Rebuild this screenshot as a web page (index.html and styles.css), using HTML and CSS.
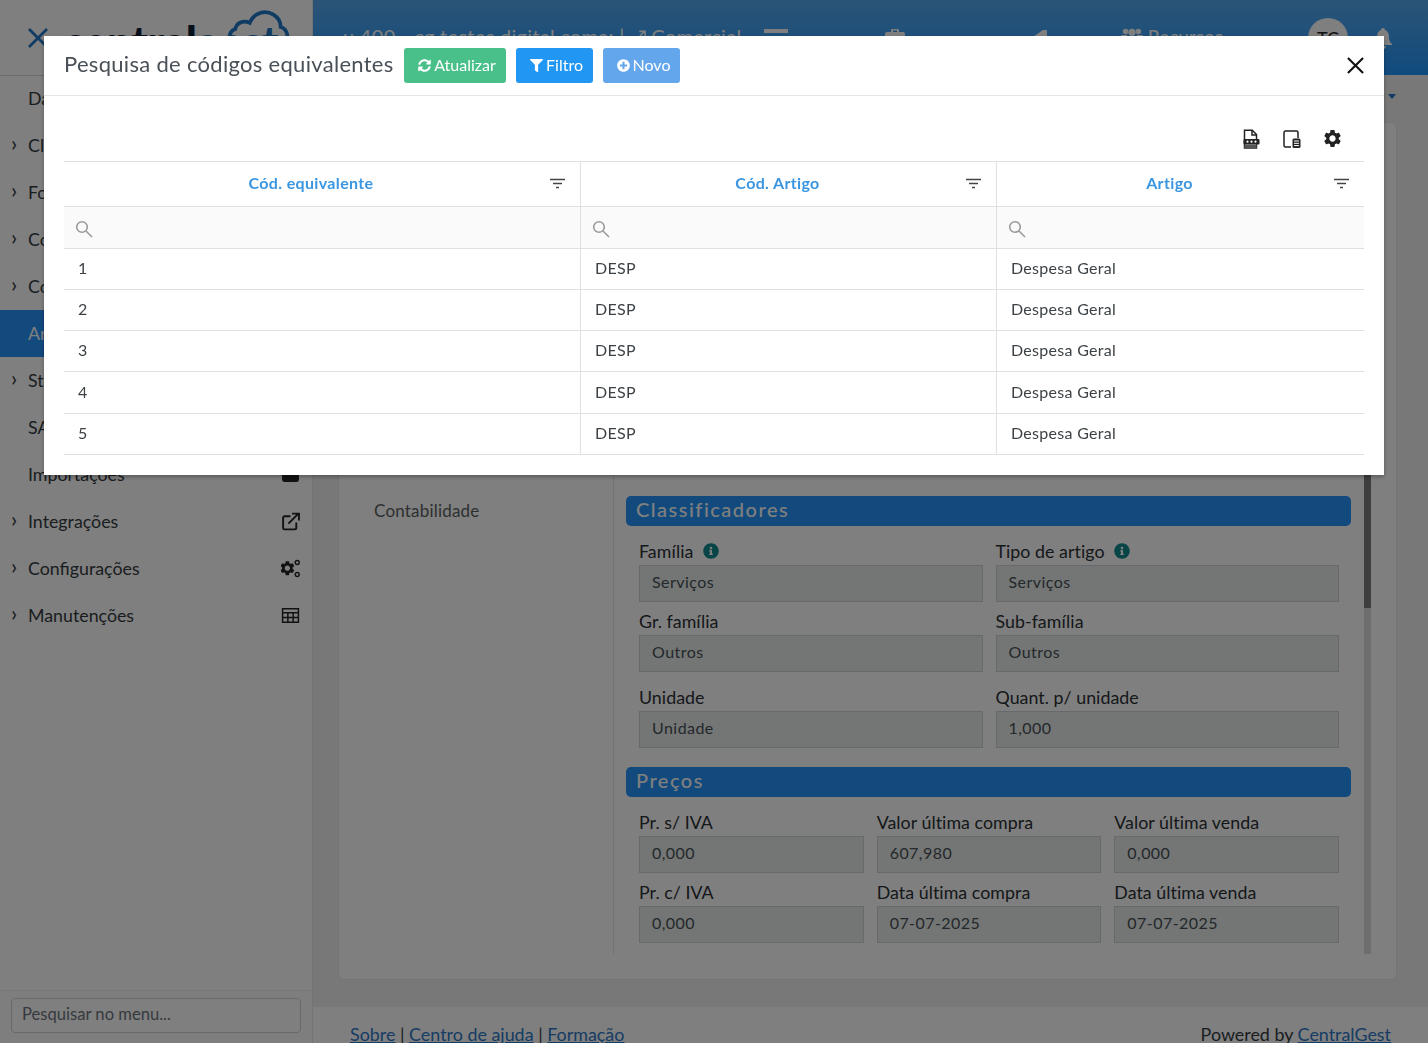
FILE: index.html
```html
<!DOCTYPE html>
<html lang="pt">
<head>
<meta charset="utf-8">
<title>Pesquisa de códigos equivalentes</title>
<link rel="stylesheet" href="styles.css">
</head>
<body>
<div class="app">
  <aside class="sidebar">
    <div class="brand">
      <svg class="brand-x" viewBox="0 0 22 22"><path d="M2 2l18 18M20 2L2 20"/></svg>
      <span class="brand-text">central<span class="brand-accent">gest</span></span>
      <svg class="brand-cloud" viewBox="0 0 64 40"><path d="M10 38C2 36 1 24 9 21c1-6 8-9 14-6C27 5 38 2 46 7c5 3 7 8 7 12 7 2 9 12 3 18"/></svg>
    </div>
    <nav class="menu">
      <a class="item"><span class="chev"></span><span class="label">Dashboard</span></a>
      <a class="item"><span class="chev">›</span><span class="label">Clientes</span></a>
      <a class="item"><span class="chev">›</span><span class="label">Fornecedores</span></a>
      <a class="item"><span class="chev">›</span><span class="label">Compras</span></a>
      <a class="item"><span class="chev">›</span><span class="label">Contabilidade</span></a>
      <a class="item active"><span class="chev"></span><span class="label">Artigos</span></a>
      <a class="item"><span class="chev">›</span><span class="label">Stocks</span></a>
      <a class="item"><span class="chev"></span><span class="label">SAF-T</span></a>
      <a class="item"><span class="chev"></span><span class="label">Importações</span>
        <svg class="mi" viewBox="0 0 18 18"><rect x="1" y="3" width="16" height="13" rx="2" fill="currentColor"/></svg></a>
      <a class="item"><span class="chev">›</span><span class="label">Integrações</span>
        <svg class="mi" viewBox="0 0 18 18"><path class="ln" d="M9 4H3.500A1.500 1.500 0 0 0 2 5.500V15a1.500 1.500 0 0 0 1.500 1.500H13a1.500 1.500 0 0 0 1.500-1.500V10"/><path class="ln" d="M7 11L16 2M10.500 1.500H17V8"/></svg></a>
      <a class="item"><span class="chev">›</span><span class="label">Configurações</span>
        <svg class="mi" viewBox="0 0 24 24"><path fill="currentColor" transform="translate(-3 .5) scale(.92)" d="M19.140 12.940c.04-.3.06-.61.06-.94 0-.32-.02-.64-.07-.94l2.030-1.580a.49.49 0 0 0 .12-.61l-1.920-3.320a.488.488 0 0 0-.59-.22l-2.390.96c-.5-.38-1.030-.7-1.620-.94l-.36-2.540a.484.484 0 0 0-.48-.41h-3.840c-.24 0-.43.17-.47.41l-.36 2.540c-.59.24-1.130.57-1.620.94l-2.390-.96c-.22-.08-.47 0-.59.22L2.740 8.870c-.12.21-.08.47.12.61l2.030 1.580c-.05.3-.09.63-.09.94s.02.64.07.94l-2.030 1.580a.49.49 0 0 0-.12.61l1.920 3.320c.12.22.37.29.59.22l2.390-.96c.5.38 1.030.7 1.620.94l.36 2.540c.05.24.24.41.48.41h3.840c.24 0 .44-.17.47-.41l.36-2.540c.59-.24 1.130-.56 1.620-.94l2.390.96c.22.08.47 0 .59-.22l1.920-3.320c.12-.22.07-.47-.12-.61l-2.010-1.580zM12 15.600c-1.980 0-3.600-1.620-3.600-3.600s1.620-3.600 3.600-3.600 3.600 1.620 3.600 3.600-1.620 3.600-3.600 3.600z"/><circle class="ln2" cx="20.500" cy="4.500" r="2.500"/><circle class="ln2" cx="20.500" cy="19.500" r="2.500"/></svg></a>
      <a class="item"><span class="chev">›</span><span class="label">Manutenções</span>
        <svg class="mi" viewBox="0 0 18 18"><path class="ln ln-thin" d="M1.500 2.500h15v13h-15zM1.500 6.500h15M1.500 11h15M6.500 6.500v9M11.500 6.500v9"/></svg></a>
    </nav>
    <div class="side-search"><div class="side-input">Pesquisar no menu...</div></div>
  </aside>

  <div class="main">
    <header class="topbar">
      <span class="top-company">u 400 - cg testes digital.coma: | <svg class="ti ti-ext" viewBox="0 0 18 18"><path d="M7 11L16 2M10.500 1.500H17V8" class="ln"/></svg> Comercial<span class="caret"></span></span>
      <span class="bars"><i></i><i></i><i></i></span>
      <svg class="ti ti-brief" viewBox="0 0 20 20"><path fill="currentColor" d="M7 2h6a1 1 0 0 1 1 1v2h4a2 2 0 0 1 2 2v10H0V7a2 2 0 0 1 2-2h4V3a1 1 0 0 1 1-1zm1 1.500V5h4V3.500z"/></svg>
      <svg class="ti ti-home" viewBox="0 0 20 20"><path fill="currentColor" d="M13 3L0 12l1.500 1.500L3 12.300V19h14V3z"/></svg>
      <span class="top-res"><svg class="ti" viewBox="0 0 24 20"><g fill="currentColor"><circle cx="5" cy="5" r="3"/><circle cx="19" cy="5" r="3"/><circle cx="12" cy="6" r="4"/><path d="M0 9h7l-2 6H0zM17 9h7v6h-5zM6 11h12v8H6z"/></g></svg> Recursos</span>
      <span class="avatar">TC</span>
      <svg class="ti ti-bell" viewBox="0 0 18 22"><path fill="currentColor" d="M9 0a2 2 0 0 1 2 2c3 1 4 4 4 7 0 4 1 5 3 7v1H0v-1c2-2 3-3 3-7 0-3 1-6 4-7a2 2 0 0 1 2-2zM6 18h6a3 3 0 0 1-6 0z"/></svg>
    </header>

    <div class="tabs"><span class="tab-caret"></span></div>

    <section class="card">
      <div class="card-tabs"><span class="card-tab">Contabilidade</span></div>
      <div class="pane">
        <div class="form">
          <h3 class="bar">Classificadores</h3>
          <div class="row row2">
            <div class="field"><label class="flabel">Família <svg class="info" viewBox="0 0 512 512"><path d="M256 8C119.043 8 8 119.083 8 256c0 136.997 111.043 248 248 248s248-111.003 248-248C504 119.083 392.957 8 256 8zm0 110c23.196 0 42 18.804 42 42s-18.804 42-42 42-42-18.804-42-42 18.804-42 42-42zm56 254c0 6.627-5.373 12-12 12h-88c-6.627 0-12-5.373-12-12v-24c0-6.627 5.373-12 12-12h12v-64h-12c-6.627 0-12-5.373-12-12v-24c0-6.627 5.373-12 12-12h64c6.627 0 12 5.373 12 12v100h12c6.627 0 12 5.373 12 12v24z"/></svg></label><div class="input">Serviços</div></div>
            <div class="field"><label class="flabel">Tipo de artigo <svg class="info" viewBox="0 0 512 512"><path d="M256 8C119.043 8 8 119.083 8 256c0 136.997 111.043 248 248 248s248-111.003 248-248C504 119.083 392.957 8 256 8zm0 110c23.196 0 42 18.804 42 42s-18.804 42-42 42-42-18.804-42-42 18.804-42 42-42zm56 254c0 6.627-5.373 12-12 12h-88c-6.627 0-12-5.373-12-12v-24c0-6.627 5.373-12 12-12h12v-64h-12c-6.627 0-12-5.373-12-12v-24c0-6.627 5.373-12 12-12h64c6.627 0 12 5.373 12 12v100h12c6.627 0 12 5.373 12 12v24z"/></svg></label><div class="input">Serviços</div></div>
          </div>
          <div class="row row2 tight">
            <div class="field"><label class="flabel">Gr. família</label><div class="input">Outros</div></div>
            <div class="field"><label class="flabel">Sub-família</label><div class="input">Outros</div></div>
          </div>
          <div class="row row2">
            <div class="field"><label class="flabel">Unidade</label><div class="input">Unidade</div></div>
            <div class="field"><label class="flabel">Quant. p/ unidade</label><div class="input">1,000</div></div>
          </div>
          <h3 class="bar bar-next">Preços</h3>
          <div class="row row3">
            <div class="field"><label class="flabel">Pr. s/ IVA</label><div class="input">0,000</div></div>
            <div class="field"><label class="flabel">Valor última compra</label><div class="input">607,980</div></div>
            <div class="field"><label class="flabel">Valor última venda</label><div class="input">0,000</div></div>
          </div>
          <div class="row row3 tight">
            <div class="field"><label class="flabel">Pr. c/ IVA</label><div class="input">0,000</div></div>
            <div class="field"><label class="flabel">Data última compra</label><div class="input">07-07-2025</div></div>
            <div class="field"><label class="flabel">Data última venda</label><div class="input">07-07-2025</div></div>
          </div>
        </div>
        <div class="scroll"><div class="thumb"></div></div>
      </div>
    </section>

    <footer class="foot">
      <span><a>Sobre</a> | <a>Centro de ajuda</a> | <a>Formação</a></span>
      <span>Powered by <a>CentralGest</a></span>
    </footer>
  </div>
</div>

<div class="overlay"></div>

<div class="modal">
  <div class="modal-head">
    <h2 class="modal-title">Pesquisa de códigos equivalentes</h2>
    <button class="btn btn-green"><svg class="bi" viewBox="0 0 512 512"><path d="M370.720 133.280C339.458 104.008 298.888 87.962 255.848 88c-77.458.068-144.328 53.178-162.791 126.850-1.344 5.363-6.122 9.150-11.651 9.150H24.103c-7.498 0-13.194-6.807-11.807-14.176C33.933 94.924 134.813 8 256 8c66.448 0 126.791 26.136 171.315 68.685L463.030 40.970C478.149 25.851 504 36.559 504 57.941V192c0 13.255-10.745 24-24 24H345.941c-21.382 0-32.090-25.851-16.971-40.971l41.750-41.749zM32 296h134.059c21.382 0 32.090 25.851 16.971 40.971l-41.750 41.750c31.262 29.273 71.835 45.319 114.876 45.280 77.418-.07 144.315-53.144 162.787-126.849 1.344-5.363 6.122-9.150 11.651-9.150h57.304c7.498 0 13.194 6.807 11.807 14.176C478.067 417.076 377.187 504 256 504c-66.448 0-126.791-26.136-171.315-68.685L48.970 471.030C33.851 486.149 8 475.441 8 454.059V320c0-13.255 10.745-24 24-24z"/></svg>Atualizar</button>
    <button class="btn btn-blue"><svg class="bi" viewBox="0 0 512 512"><path d="M487.976 0H24.028C2.710 0-8.047 25.866 7.058 40.971L192 225.941V432c0 7.831 3.821 15.170 10.237 19.662l80 55.980C298.020 518.690 320 507.493 320 487.980V225.941l184.947-184.970C520.021 25.896 509.338 0 487.976 0z"/></svg>Filtro</button>
    <button class="btn btn-light"><svg class="bi" viewBox="0 0 512 512"><path d="M256 8C119 8 8 119 8 256s111 248 248 248 248-111 248-248S393 8 256 8zm144 276c0 6.600-5.400 12-12 12h-92v92c0 6.600-5.400 12-12 12h-56c-6.600 0-12-5.400-12-12v-92h-92c-6.600 0-12-5.400-12-12v-56c0-6.600 5.400-12 12-12h92v-92c0-6.600 5.400-12 12-12h56c6.600 0 12 5.400 12 12v92h92c6.600 0 12 5.400 12 12v56z"/></svg>Novo</button>
    <button class="close" aria-label="Fechar"><svg viewBox="0 0 18 18"><path d="M1 1l16 16M17 1L1 17"/></svg></button>
  </div>
  <div class="modal-body">
    <div class="tools">
      <svg class="tool" viewBox="0 0 20 20"><path d="M3.500 19V1.200h7.800l4.200 4.300V19z" class="tl"/><path d="M11 1.200v4.800h4.500" class="tl"/><rect x="2.500" y="10" width="16" height="5.500" rx="1" fill="#222"/><path d="M3.500 15.500h12V19h-12z" fill="#555"/><circle cx="6.500" cy="12.700" r="1.100" fill="#fff"/><circle cx="10.500" cy="12.700" r="1.100" fill="#fff"/><circle cx="14.500" cy="12.700" r="1.100" fill="#fff"/></svg>
      <svg class="tool" viewBox="0 0 20 20"><path d="M9 18H3.500A1.500 1.500 0 0 1 2 16.500V3.500A1.500 1.500 0 0 1 3.500 2h11A1.500 1.500 0 0 1 16 3.500V9" class="tl"/><rect x="10.500" y="9.500" width="8" height="9.500" rx="1.500" fill="#222"/><path d="M12 12h5M12 14.300h5M12 16.600h5" stroke="#fff" stroke-width="1"/></svg>
      <svg class="tool tool-gear" viewBox="0 0 24 24"><path fill="#222" d="M19.140 12.940c.04-.3.06-.61.06-.94 0-.32-.02-.64-.07-.94l2.030-1.580a.49.49 0 0 0 .12-.61l-1.920-3.320a.488.488 0 0 0-.59-.22l-2.390.96c-.5-.38-1.030-.7-1.620-.94l-.36-2.540a.484.484 0 0 0-.48-.41h-3.840c-.24 0-.43.17-.47.41l-.36 2.540c-.59.24-1.130.57-1.620.94l-2.390-.96c-.22-.08-.47 0-.59.22L2.740 8.870c-.12.21-.08.47.12.61l2.030 1.580c-.05.3-.09.63-.09.94s.02.64.07.94l-2.030 1.580a.49.49 0 0 0-.12.61l1.920 3.320c.12.22.37.29.59.22l2.390-.96c.5.38 1.030.7 1.620.94l.36 2.540c.05.24.24.41.48.41h3.840c.24 0 .44-.17.47-.41l.36-2.540c.59-.24 1.130-.56 1.620-.94l2.390.96c.22.08.47 0 .59-.22l1.920-3.320c.12-.22.07-.47-.12-.61l-2.010-1.580zM12 15.600c-1.980 0-3.600-1.620-3.600-3.600s1.620-3.600 3.600-3.600 3.600 1.620 3.600 3.600-1.620 3.600-3.600 3.600z"/></svg>
    </div>
    <table class="grid">
      <colgroup><col class="c1"><col class="c2"><col class="c3"></colgroup>
      <thead>
        <tr class="hrow">
          <th><span class="th-text">Cód. equivalente</span><svg class="fic" viewBox="0 0 15 12"><path d="M0 1.500h15M3 5.500h9M6 9.500h3"/></svg></th>
          <th><span class="th-text">Cód. Artigo</span><svg class="fic" viewBox="0 0 15 12"><path d="M0 1.500h15M3 5.500h9M6 9.500h3"/></svg></th>
          <th><span class="th-text">Artigo</span><svg class="fic" viewBox="0 0 15 12"><path d="M0 1.500h15M3 5.500h9M6 9.500h3"/></svg></th>
        </tr>
        <tr class="frow">
          <td><svg class="sic" viewBox="0 0 18 18"><circle cx="7" cy="7" r="5.300"/><path d="M11 11l6 6"/></svg></td>
          <td><svg class="sic" viewBox="0 0 18 18"><circle cx="7" cy="7" r="5.300"/><path d="M11 11l6 6"/></svg></td>
          <td><svg class="sic" viewBox="0 0 18 18"><circle cx="7" cy="7" r="5.300"/><path d="M11 11l6 6"/></svg></td>
        </tr>
      </thead>
      <tbody>
        <tr><td>1</td><td>DESP</td><td>Despesa Geral</td></tr>
        <tr><td>2</td><td>DESP</td><td>Despesa Geral</td></tr>
        <tr><td>3</td><td>DESP</td><td>Despesa Geral</td></tr>
        <tr><td>4</td><td>DESP</td><td>Despesa Geral</td></tr>
        <tr><td>5</td><td>DESP</td><td>Despesa Geral</td></tr>
      </tbody>
    </table>
  </div>
</div>
</body>
</html>
```

FILE: styles.css
```css
* { box-sizing: border-box; }
html, body { margin: 0; height: 100%; overflow: hidden; }
body { font-family: "Lato", "Noto Sans", sans-serif; color: #343a40; font-size: 18px; }

.app { display: grid; grid-template-columns: 313px 1fr; height: 1043px; }

/* sidebar */
.sidebar { display: flex; flex-direction: column; background: #fff; border-right: 1px solid #e6e8ea; height: 1043px; }
.brand { position: relative; height: 75px; flex: none; box-shadow: 0 1px 0 #d8d8d8; overflow: hidden; display: flex; align-items: center; }
.brand-x { width: 22px; height: 22px; margin-left: 27px; margin-top: 1px; flex: none; }
.brand-x path { fill: none; stroke: #2178c8; stroke-width: 2.800; }
.brand-text { margin-left: 14px; font-size: 44px; font-weight: 900; color: #0e2236; line-height: 1; letter-spacing: -.3px; margin-top: 6px; }
.brand-accent { color: #2178c8; }
.brand-cloud { position: absolute; left: 226px; top: 7px; width: 66px; height: 42px; fill: none; stroke: #2178c8; stroke-width: 3.600; }
.menu { flex: 1; display: flex; flex-direction: column; }
.item { height: 47px; display: flex; align-items: center; padding: 0 12px 1px 0; flex: none; }
.chev { width: 28px; flex: none; padding-left: 11px; font-size: 22px; line-height: 1; margin-top: -4px; }
.label { flex: 1; font-size: 17.800px; }
.active { background: #2594fa; color: #fff; }
.mi { width: 19px; height: 19px; color: #222; flex: none; }
.ln { fill: none; stroke: currentColor; stroke-width: 1.800; }
.ln-thin { stroke-width: 1.400; }
.ln2 { fill: none; stroke: currentColor; stroke-width: 1.800; }
.side-search { height: 53px; flex: none; padding: 7px 11px 0; border-top: 1px solid #f0f0f0; background: #fcfcfc; }
.side-input { height: 35px; border: 1px solid #cfd4d8; border-radius: 4px; font-size: 16.600px; line-height: 31px; padding-left: 10px; color: #6c757d; background: #fff; }

/* main */
.main { display: flex; flex-direction: column; background: #eef0ee; height: 1043px; min-width: 0; }
.topbar { height: 75px; flex: none; background: linear-gradient(#58a8ee, #2096fb); color: #fff; display: flex; align-items: center; font-size: 20px; padding-left: 30px; }
.top-company { white-space: nowrap; margin-top: -3px; letter-spacing: .3px; width: 421px; flex: none; }
.ti { width: 20px; height: 20px; color: #fff; flex: none; vertical-align: -2px; }
.ti-ext { width: 16px; height: 16px; }
.caret { display: inline-block; border: 5px solid transparent; border-top-color: #fff; border-bottom: 0; margin-left: 3px; vertical-align: 3px; }
.bars { display: flex; flex-direction: column; gap: 5px; width: 24px; margin-top: 4px; flex: none; }
.bars i { display: block; height: 4px; background: #fff; }
.ti-brief { margin-left: 97px; margin-top: -2px; }
.ti-home { margin-left: 125px; margin-top: -2px; }
.top-res { margin-left: 71px; width: 187px; white-space: nowrap; margin-top: -3px; flex: none; font-size: 19px; }
.top-res .ti { width: 22px; }
.avatar { width: 40px; height: 40px; border-radius: 50%; background: #fff; color: #222; display: flex; align-items: center; justify-content: center; font-size: 18px; flex: none; }
.ti-bell { margin-left: 26px; margin-top: 2px; width: 18px; height: 22px; }
.tabs { height: 47px; flex: none; display: flex; justify-content: flex-end; padding: 19px 32px 0 0; }
.tab-caret { border: 4px solid transparent; border-top: 5px solid #2178c8; border-bottom: 0; width: 0; height: 0; }
.card { margin: 0 31px 0 25px; height: 858px; flex: none; background: #fff; border-radius: 6px; border: 1px solid #e8e8e8; display: grid; grid-template-columns: 275px 1fr; padding-bottom: 26px; }
.card-tabs { border-right: 1px solid #e4e4e4; padding: 377px 0 0 35px; font-size: 17px; letter-spacing: .2px; color: #5a5f63; }
.pane { display: flex; min-width: 0; }
.form { width: 750px; flex: none; padding: 373px 13px 0 12px; }
.bar { margin: 0; height: 30px; border-radius: 5px; background: #2594fa; color: #fff; font-size: 20px; font-weight: 500; line-height: 27px; padding-left: 10px; letter-spacing: 1.500px; }
.bar-next { margin-top: 19px; }
.row { display: grid; padding: 14px 12px 0 13px; column-gap: 13px; }
.row.tight { padding-top: 8px; }
.row2 { grid-template-columns: 1fr 1fr; }
.row3 { grid-template-columns: 1fr 1fr 1fr; }
.flabel { display: flex; align-items: center; gap: 9px; height: 25px; padding-bottom: 4px; font-size: 17.800px; letter-spacing: .05px; color: #2b3034; }
.info { width: 16px; height: 16px; fill: #0f8a8f; }
.input { height: 37px; border: 1px solid #ced4da; background: #e6ece9; padding-left: 12px; font-size: 16px; line-height: 31px; letter-spacing: .45px; color: #495057; }
.scroll { width: 7px; flex: none; height: 831px; background: #dcdcdc; }
.thumb { height: 485px; background: #7c7c7c; }

.foot { flex: 1; margin-top: 26px; border-top: 1px solid #f3f3f3; background: #fff; display: flex; justify-content: space-between; padding: 16px 37px 0; font-size: 17.900px; white-space: nowrap; }
.foot a { color: #2c78c8; text-decoration: underline; }

/* modal */
.overlay { position: fixed; inset: 0; background: rgba(0, 0, 0, .5); }
.modal { position: fixed; left: 44px; top: 36px; width: 1340px; height: 439px; background: #fff; box-shadow: 0 2px 4px rgba(0,0,0,.3); color: #343a40; }
.modal-head { height: 60px; border-bottom: 1px solid #e3e6e8; display: flex; align-items: center; padding: 0 20px; gap: 10px; }
.modal-title { margin: 0 0 5px; font-size: 22px; font-weight: 400; color: #495057; letter-spacing: .3px; white-space: nowrap; width: 330px; flex: none; }
.btn { height: 35px; border: 0; border-radius: 3px; color: #fff; font: 400 16px "Lato", sans-serif; display: flex; align-items: center; justify-content: center; gap: 3px; padding: 0 0 2px 4px; flex: none; }
.bi { width: 13px; height: 13px; fill: #fff; margin-top: 2px; }
.btn-green { width: 102px; background: #49bf8a; }
.btn-blue { width: 77px; background: #2196f3; }
.btn-light { width: 77px; background: #64a6ec; }
.close { margin-left: auto; width: 17px; height: 17px; padding: 0; border: 0; background: none; }
.close svg { display: block; width: 17px; height: 17px; fill: none; stroke: #111; stroke-width: 2.200; }
.modal-body { padding: 0 20px; }
.tools { height: 65px; display: flex; justify-content: flex-end; align-items: flex-end; gap: 21px; padding: 0 21px 12px 0; }
.tool { width: 20px; height: 20px; display: block; }
.tool-gear { width: 21px; height: 21px; margin-left: -1px; }
.tl { fill: none; stroke: #222; stroke-width: 1.500; }
.grid { width: 1300px; border-collapse: collapse; table-layout: fixed; font-size: 16px; color: #3c4246; }
.c1 { width: 516.500px; } .c2 { width: 416px; }
.grid td, .grid th { border-top: 1px solid #e0e0e0; border-bottom: 1px solid #e0e0e0; border-left: 1px solid #e0e0e0; padding: 0 14px; }
.grid td:first-child, .grid th:first-child { border-left: 0; }
.hrow th { height: 45px; position: relative; font-weight: 700; color: #3a96e0; font-size: 16px; letter-spacing: .35px; text-align: center; padding: 0 36px 4px 14px; }
.fic { position: absolute; right: 15px; top: 16px; width: 15px; height: 12px; fill: none; stroke: #444; stroke-width: 1.600; }
.frow td { height: 42px; background: #fafafa; padding-top: 3px; }
.sic { display: block; width: 18px; height: 18px; margin-left: -3px; fill: none; stroke: #9a9a9a; stroke-width: 1.600; }
.grid tbody td { height: 41px; letter-spacing: .3px; padding-bottom: 3px; }
.grid tbody tr:nth-child(4) td { height: 42px; }
```
